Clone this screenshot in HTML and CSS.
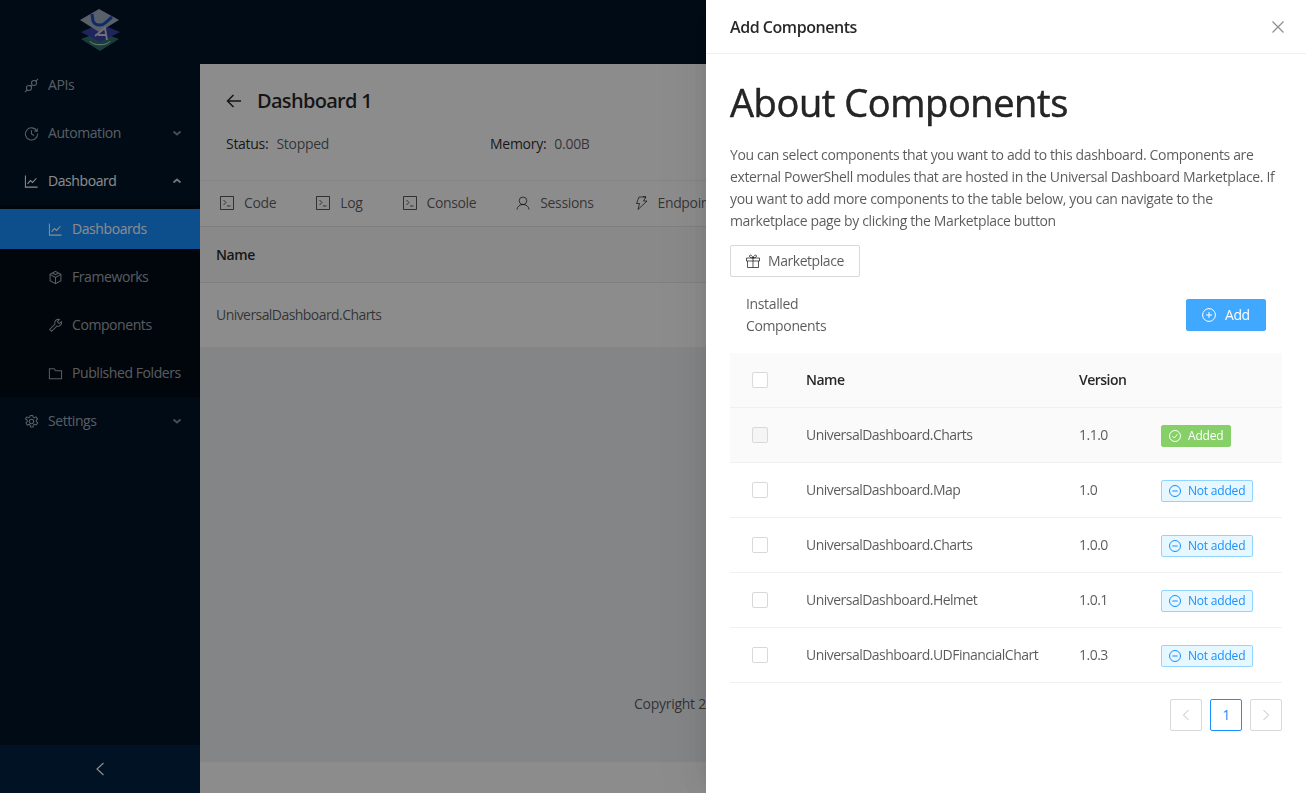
FILE: index.html
```html
<!DOCTYPE html>
<html lang="en">
<head>
  <meta charset="UTF-8" />
  <title>Add Components</title>
  <link rel="stylesheet" href="styles.css">
</head>
<body>

  <div class="layout">
    <!-- Sidebar -->
    <aside class="sider">
      <div class="logo">
        <svg width="44" height="44" viewBox="0 0 44 44">
          <polygon points="22,24 41,31 22,43 3,31" fill="#2f6f6a"/>
          <path d="M12 33 C14 38 30 38 32 33" fill="none" stroke="#cfe3e0" stroke-width="1"/>
          <polygon points="22,16 42,24 22,34 3,24" fill="#3a44a8"/>
          <polygon points="21,1 41,12 21,24 2,12" fill="#a3afbf"/>
          <path d="M14 6 L15 13 C17 18 24 18 27 15 L34 9" fill="none" stroke="#1f4fc0" stroke-width="3"/>
          <path d="M17 28 L27 20 L29 32 M20 27 H29" fill="none" stroke="#c9ced8" stroke-width="1.800"/>
        </svg>
      </div>

      <ul class="menu">
        <li class="item">
          <svg class="ico" viewBox="0 0 16 16"><circle cx="5.300" cy="10.700" r="2.700"/><circle cx="10.700" cy="5.300" r="2.700"/><path d="M12.600 3.400L15 1M1 15l2.400-2.400M7 7.500l1.500 1.500"/></svg>
          APIs
        </li>
        <li class="item">
          <svg class="ico" viewBox="0 0 16 16"><path d="M13.800 5.500A6.500 6.500 0 1 0 14.500 8M14.300 2.700l-.3 3-3-.4M8 4.500V8.500l2.800 1.700"/></svg>
          Automation
          <svg class="caret" viewBox="0 0 10 10"><path d="M1.500 3.500L5 6.500l3.500-3"/></svg>
        </li>
        <li class="item open">
          <svg class="ico" viewBox="0 0 16 16"><path d="M1.500 1.500v12.500h13M3.800 10.500l3-3.500 2.400 2 4-4.500"/></svg>
          Dashboard
          <svg class="caret" viewBox="0 0 10 10"><path d="M1.500 6.500L5 3.500l3.500 3"/></svg>
        </li>
        <li>
          <ul class="submenu">
            <li class="item sub active">
              <svg class="ico" viewBox="0 0 16 16"><path d="M1.500 1.500v12.500h13M3.800 10.500l3-3.500 2.400 2 4-4.500"/></svg>
              Dashboards
            </li>
            <li class="item sub">
              <svg class="ico" viewBox="0 0 16 16"><path d="M8 1.500l5.800 3.200v6.600L8 14.500l-5.800-3.200V4.700zM2.200 4.700L8 8l5.800-3.300M8 8v6.500M5 3.200L8 5l3-1.800" /></svg>
              Frameworks
            </li>
            <li class="item sub">
              <svg class="ico" viewBox="0 0 16 16"><path d="M14.300 3.800l-2.300 2.200-2-2 2.200-2.300a3.800 3.800 0 0 0-4.800 4.900L1.800 12.200l2 2 5.700-5.600a3.800 3.800 0 0 0 4.800-4.800z"/></svg>
              Components
            </li>
            <li class="item sub">
              <svg class="ico" viewBox="0 0 16 16"><path d="M1.500 3h5l1.500 2h6.500v8.500h-13z"/></svg>
              Published Folders
            </li>
          </ul>
        </li>
        <li class="item">
          <svg class="ico" viewBox="0 0 16 16"><path d="M6.700 1.500h2.600l.4 1.900 1.400.6 1.700-1 1.700 2.200-1.400 1.400.1 1.500 1.400 1.300-1.400 2.300-1.900-.7-1.200.8-.4 2h-2.600l-.5-2-1.200-.7-1.900.7-1.400-2.300 1.400-1.400v-1.400L1.500 5.200l1.500-2.200 1.800 1 1.400-.7z"/><circle cx="8" cy="8" r="2.300"/></svg>
          Settings
          <svg class="caret" viewBox="0 0 10 10"><path d="M1.500 3.500L5 6.500l3.500-3"/></svg>
        </li>
      </ul>

      <div class="collapse-bar">
        <svg width="12" height="14" viewBox="0 0 12 14"><path d="M9.500 1L3 7l6.500 6" fill="none" stroke="#fff" stroke-width="1.200"/></svg>
      </div>
    </aside>

    <!-- Main column -->
    <div class="main">
      <div class="topbar"></div>

      <section class="page-head">
        <div class="head-title">
          <svg width="16" height="16" viewBox="0 0 16 16"><path d="M15 8H1.500M7.500 2L1.500 8l6 6" fill="none" stroke="#000" stroke-opacity=".85" stroke-width="1.500"/></svg>
          <h2>Dashboard 1</h2>
        </div>
        <div class="head-info">
          <div class="info-col"><b>Status:</b><span>Stopped</span></div>
          <div class="info-col"><b>Memory:</b><span>0.00B</span></div>
        </div>
      </section>

      <nav class="tabs">
        <span class="tab"><svg class="tab-ico" viewBox="0 0 14 14"><path d="M.5.500h13v13H.5zM3.500 4l2.500 2.500L3.500 9M7 10h3.500"/></svg>Code</span>
        <span class="tab"><svg class="tab-ico" viewBox="0 0 14 14"><path d="M.5.500h13v13H.5zM3.500 4l2.500 2.500L3.500 9M7 10h3.500"/></svg>Log</span>
        <span class="tab"><svg class="tab-ico" viewBox="0 0 14 14"><path d="M.5.500h13v13H.5zM3.500 4l2.500 2.500L3.500 9M7 10h3.500"/></svg>Console</span>
        <span class="tab"><svg class="tab-ico" viewBox="0 0 14 14"><circle cx="7" cy="4.800" r="3.800"/><path d="M1 13.500c.3-3.200 2.800-5 6-5s5.700 1.800 6 5"/></svg>Sessions</span>
        <span class="tab"><svg class="tab-ico" viewBox="0 0 14 14"><path d="M5 1h7L9.500 5H13L4 13.500l1.500-6H2.500zM12 1L9 .5"/></svg>Endpoints</span>
      </nav>

      <div class="bg-head">Name</div>
      <div class="bg-row">UniversalDashboard.Charts</div>

      <div class="content-fill">
        <p class="copyright">Copyright 2020 Ironman Software LLC</p>
      </div>
      <div class="foot-strip"></div>
    </div>
  </div>

  <div class="mask"></div>

  <!-- Drawer -->
  <aside class="drawer">
    <header class="drawer-head">
      <span>Add Components</span>
      <svg width="14" height="14" viewBox="0 0 14 14"><path d="M1.500 1.500l11 11M12.500 1.500l-11 11" fill="none" stroke="#000" stroke-opacity=".45" stroke-width="1.200"/></svg>
    </header>

    <div class="drawer-body">
      <h1>About Components</h1>
      <p class="about">You can select components that you want to add to this dashboard. Components are external PowerShell modules that are hosted in the Universal Dashboard Marketplace. If you want to add more components to the table below, you can navigate to the marketplace page by clicking the Marketplace button</p>

      <button class="btn">
        <svg width="14" height="14" viewBox="0 0 14 14" fill="none" stroke="currentColor"><path d="M.5 4h13v3H.5zM1.500 7v6.500h11V7M7 4v9.500M7 4C5.500 4 3.500 3.500 3.500 2S6 .5 7 4c1-3.500 3.500-3.500 3.500-2S8.500 4 7 4z"/></svg>
        Marketplace
      </button>

      <div class="list-bar">
        <div class="list-title">Installed Components</div>
        <button class="btn primary">
          <svg width="14" height="14" viewBox="0 0 14 14" fill="none" stroke="currentColor"><circle cx="7" cy="7" r="6.400"/><path d="M4 7h6M7 4v6"/></svg>
          Add
        </button>
      </div>

      <table class="comp-table">
        <colgroup>
          <col class="c-check"><col class="c-name"><col class="c-ver"><col>
        </colgroup>
        <thead>
          <tr><th><span class="check"></span></th><th>Name</th><th>Version</th><th></th></tr>
        </thead>
        <tbody>
          <tr class="is-added">
            <td><span class="check disabled"></span></td>
            <td>UniversalDashboard.Charts</td>
            <td>1.1.0</td>
            <td><span class="tag green"><svg viewBox="0 0 12 12"><circle cx="6" cy="6" r="5.500"/><path d="M3.500 6.200L5.300 8l3.200-3.800"/></svg>Added</span></td>
          </tr>
          <tr>
            <td><span class="check"></span></td>
            <td>UniversalDashboard.Map</td>
            <td>1.0</td>
            <td><span class="tag blue"><svg viewBox="0 0 12 12"><circle cx="6" cy="6" r="5.500"/><path d="M3.300 6h5.400"/></svg>Not added</span></td>
          </tr>
          <tr>
            <td><span class="check"></span></td>
            <td>UniversalDashboard.Charts</td>
            <td>1.0.0</td>
            <td><span class="tag blue"><svg viewBox="0 0 12 12"><circle cx="6" cy="6" r="5.500"/><path d="M3.300 6h5.400"/></svg>Not added</span></td>
          </tr>
          <tr>
            <td><span class="check"></span></td>
            <td>UniversalDashboard.Helmet</td>
            <td>1.0.1</td>
            <td><span class="tag blue"><svg viewBox="0 0 12 12"><circle cx="6" cy="6" r="5.500"/><path d="M3.300 6h5.400"/></svg>Not added</span></td>
          </tr>
          <tr>
            <td><span class="check"></span></td>
            <td>UniversalDashboard.UDFinancialChart</td>
            <td>1.0.3</td>
            <td><span class="tag blue"><svg viewBox="0 0 12 12"><circle cx="6" cy="6" r="5.500"/><path d="M3.300 6h5.400"/></svg>Not added</span></td>
          </tr>
        </tbody>
      </table>

      <div class="pager">
        <span class="page-btn dim"><svg width="10" height="12" viewBox="0 0 10 12"><path d="M7.500 1L2.500 6l5 5" fill="none" stroke="currentColor"/></svg></span>
        <span class="page-btn current">1</span>
        <span class="page-btn dim"><svg width="10" height="12" viewBox="0 0 10 12"><path d="M2.500 1l5 5-5 5" fill="none" stroke="currentColor"/></svg></span>
      </div>
    </div>
  </aside>

</body>
</html>
```

FILE: styles.css
```css
* {
  box-sizing: border-box;
}
html, body {
  height: 100%;
}
body {
  margin: 0;
  overflow: hidden;
  font-family: "Open Sans", "Noto Sans", Arial, sans-serif;
  font-size: 14px;
  letter-spacing: -0.36px;
  line-height: 22px;
  color: rgba(0, 0, 0, 0.65);
  background: #f0f2f5;
}
h1, h2, p, ul {
  margin: 0;
  padding: 0;
}
ul {
  list-style: none;
}

.layout {
  display: flex;
  height: 793px;
}

/* sidebar */
.sider {
  width: 200px;
  flex: none;
  display: flex;
  flex-direction: column;
  background: #001529;
  color: rgba(255, 255, 255, 0.65);
}
.logo {
  height: 64px;
  padding-top: 8px;
  display: flex;
  justify-content: center;
}
.menu {
  flex: 1;
  padding-top: 1px;
  letter-spacing: -0.42px;
}
.item {
  height: 40px;
  margin: 0 0 8px;
  padding: 0 16px 0 24px;
  display: flex;
  align-items: center;
}
.item.open {
  color: #fff;
}
.item.sub {
  padding-left: 48px;
}
.submenu {
  margin-top: -4px;
  margin-bottom: 4px;
  padding: 4px 0;
  background: #000c17;
}
.submenu .item:last-child {
  margin-bottom: 0;
}
.submenu .item.active {
  background: #1890ff;
  color: #fff;
}
.ico {
  width: 15px;
  height: 15px;
  margin-right: 9px;
  flex: none;
  fill: none;
  stroke: currentColor;
  stroke-width: 1.1;
}
.caret {
  width: 10px;
  height: 10px;
  margin-left: auto;
  margin-right: 2px;
  fill: none;
  stroke: currentColor;
  stroke-width: 1.9;
  opacity: 0.8;
}
.collapse-bar {
  height: 48px;
  background: #002140;
  display: flex;
  align-items: center;
  justify-content: center;
}

/* page behind the drawer */
.main {
  flex: 1;
  min-width: 0;
  display: flex;
  flex-direction: column;
}
.topbar {
  height: 64px;
  flex: none;
  background: #001529;
}
.page-head {
  height: 116px;
  flex: none;
  padding: 23px 26px 0;
  background: #fff;
}
.head-title {
  display: flex;
  align-items: center;
  gap: 15px;
  height: 28px;
}
.head-title h2 {
  font-size: 20px;
  font-weight: 600;
  letter-spacing: -0.7px;
  color: rgba(0, 0, 0, 0.85);
}
.head-info {
  display: flex;
  margin-top: 18px;
}
.info-col {
  width: 264px;
  display: flex;
  gap: 8px;
  letter-spacing: -0.28px;
}
.info-col b {
  font-weight: 400;
  color: rgba(0, 0, 0, 0.85);
}
.tabs {
  height: 47px;
  flex: none;
  padding: 0 0 1px 20px;
  display: flex;
  align-items: center;
  gap: 40px;
  white-space: nowrap;
  overflow: hidden;
  background: #fff;
  border-top: 1px solid #f0f0f0;
  border-bottom: 1px solid #e8e8e8;
}
.tab {
  display: flex;
  align-items: center;
}
.tab-ico {
  width: 14px;
  height: 14px;
  margin-right: 10px;
  fill: none;
  stroke: currentColor;
}
.bg-head, .bg-row {
  flex: none;
  display: flex;
  align-items: center;
  padding-left: 16px;
}
.bg-head {
  height: 56px;
  background: #fafafa;
  font-weight: 600;
  color: rgba(0, 0, 0, 0.85);
  border-bottom: 1px solid #e8e8e8;
}
.bg-row {
  height: 64px;
  background: #fff;
  letter-spacing: -0.56px;
}
.content-fill {
  flex: 1;
  padding-top: 346px;
  text-align: center;
  letter-spacing: -0.26px;
}
.foot-strip {
  height: 31px;
  flex: none;
  background: #fff;
}

/* overlay */
.mask {
  position: fixed;
  top: 0;
  right: 0;
  bottom: 0;
  left: 0;
  background: rgba(0, 0, 0, 0.45);
}

/* drawer */
.drawer {
  position: fixed;
  top: 0;
  right: 0;
  bottom: 0;
  width: 600px;
  background: #fff;
  box-shadow: -6px 0 16px -8px rgba(0, 0, 0, 0.08), -9px 0 28px 0 rgba(0, 0, 0, 0.05), -12px 0 48px 16px rgba(0, 0, 0, 0.03);
}
.drawer-head {
  height: 54px;
  padding: 0 21px 0 24px;
  display: flex;
  align-items: center;
  justify-content: space-between;
  border-bottom: 1px solid #f0f0f0;
  font-size: 16px;
  font-weight: 600;
  letter-spacing: -0.45px;
  color: rgba(0, 0, 0, 0.85);
}
.drawer-body {
  padding: 23px 24px 0;
}
.drawer-body h1 {
  font-size: 38px;
  font-weight: 500;
  line-height: 50px;
  letter-spacing: -0.42px;
  -webkit-text-stroke: 0.5px rgba(0, 0, 0, 0.85);
  color: rgba(0, 0, 0, 0.85);
  margin-bottom: 17px;
}
.about {
  margin-bottom: 13px;
}
.btn {
  height: 32px;
  padding: 0 15px;
  display: inline-flex;
  align-items: center;
  gap: 8px;
  font: inherit;
  letter-spacing: -0.45px;
  color: rgba(0, 0, 0, 0.65);
  background: #fff;
  border: 1px solid #d9d9d9;
  border-radius: 2px;
}
.btn.primary {
  width: 80px;
  gap: 9px;
  color: #fff;
  background: #40a9ff;
  border-color: #40a9ff;
}
.list-bar {
  margin-top: 11px;
  padding: 0 16px 12px;
  height: 65px;
  display: flex;
  align-items: center;
  justify-content: space-between;
}
.list-title {
  width: 100px;
}

.comp-table {
  width: 552px;
  table-layout: fixed;
  border-collapse: collapse;
  letter-spacing: -0.52px;
}
.c-check {
  width: 60px;
}
.c-name {
  width: 273px;
}
.c-ver {
  width: 82px;
}
.comp-table th, .comp-table td {
  height: 55px;
  padding: 1px 16px 0;
  text-align: left;
  border-bottom: 1px solid #f0f0f0;
}
.comp-table th {
  height: 54px;
  padding-top: 0;
  font-weight: 600;
  background: #fafafa;
  color: rgba(0, 0, 0, 0.85);
}
.comp-table th:first-child, .comp-table td:first-child {
  padding: 0 0 0 22px;
}
.is-added td {
  background: #fafafa;
}
.check {
  display: block;
  width: 16px;
  height: 16px;
  background: #fff;
  border: 1px solid #d9d9d9;
  border-radius: 2px;
}
.check.disabled {
  background: #f5f5f5;
}
.tag {
  display: inline-flex;
  align-items: center;
  height: 22px;
  padding: 0 7px;
  font-size: 12px;
  line-height: 20px;
  letter-spacing: -0.2px;
  border: 1px solid transparent;
  border-radius: 2px;
  vertical-align: middle;
}
.tag svg {
  width: 12px;
  height: 12px;
  margin-right: 7px;
  fill: none;
  stroke: currentColor;
}
.tag.green {
  color: #fff;
  background: #87d068;
  border-color: #87d068;
}
.tag.blue {
  color: #1890ff;
  background: #e6f7ff;
  border-color: #91d5ff;
}

.pager {
  display: flex;
  justify-content: flex-end;
  gap: 8px;
  margin-top: 16px;
}
.page-btn {
  width: 32px;
  height: 32px;
  display: flex;
  align-items: center;
  justify-content: center;
  background: #fff;
  border: 1px solid #d9d9d9;
  border-radius: 2px;
}
.page-btn.dim {
  color: rgba(0, 0, 0, 0.25);
}
.page-btn.current {
  color: #1890ff;
  border-color: #1890ff;
}
```
